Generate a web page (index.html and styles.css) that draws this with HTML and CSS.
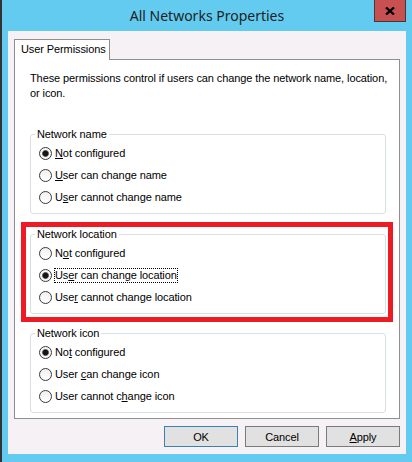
FILE: index.html
```html
<!DOCTYPE html>
<html lang="en">
<head>
<meta charset="utf-8">
<title>All Networks Properties</title>
<link rel="stylesheet" href="styles.css">
</head>
<body>
<div class="window">
  <div class="titlebar">
    <span class="title">All Networks Properties</span>
    <button class="close" aria-label="Close">
      <svg width="10" height="8" viewBox="0 0 10 8"><path d="M1 0.5 L9 7.5 M9 0.5 L1 7.5" stroke="#000" stroke-width="2.3" fill="none"/></svg>
    </button>
  </div>
  <div class="client">
    <div class="tabs"><div class="tab">User Permissions</div></div>
    <div class="panel">
      <p class="desc">These permissions control if users can change the network name, location,<br>or icon.</p>

      <fieldset class="group first">
        <legend>Network name</legend>
        <label class="option"><span class="radio checked"></span><span class="text"><u>N</u>ot configured</span></label>
        <label class="option"><span class="radio"></span><span class="text"><u>U</u>ser can change name</span></label>
        <label class="option"><span class="radio"></span><span class="text">U<u>s</u>er cannot change name</span></label>
      </fieldset>

      <div class="highlight">
        <fieldset class="group">
          <legend>Network location</legend>
          <label class="option"><span class="radio"></span><span class="text">N<u>o</u>t configured</span></label>
          <label class="option"><span class="radio checked"></span><span class="text focused">Us<u>e</u>r can change location</span></label>
          <label class="option"><span class="radio"></span><span class="text">Use<u>r</u> cannot change location</span></label>
        </fieldset>
      </div>

      <fieldset class="group last">
        <legend>Network icon</legend>
        <label class="option"><span class="radio checked"></span><span class="text">No<u>t</u> configured</span></label>
        <label class="option"><span class="radio"></span><span class="text">User <u>c</u>an change icon</span></label>
        <label class="option"><span class="radio"></span><span class="text">User cannot c<u>h</u>ange icon</span></label>
      </fieldset>
    </div>
    <div class="buttons">
      <button class="btn default">OK</button>
      <button class="btn">Cancel</button>
      <button class="btn"><u>A</u>pply</button>
    </div>
  </div>
</div>
</body>
</html>
```

FILE: styles.css
```css
* { box-sizing: border-box; }

html, body {
  margin: 0;
  padding: 0;
}

body {
  width: 412px;
  height: 462px;
  overflow: hidden;
  background: #62cbef;
  font-family: "Liberation Sans", Arial, sans-serif;
  font-size: 11px;
  color: #000;
}

.window {
  width: 412px;
  height: 462px;
  background: #62cbef;
  border-left: 2px solid #333;
  display: flex;
  flex-direction: column;
}

.titlebar {
  position: relative;
  height: 31px;
  display: flex;
  align-items: center;
  justify-content: center;
}

.title {
  font-family: "Noto Sans", "Open Sans", sans-serif;
  font-size: 14px;
  color: #1e1e1e;
}

.close {
  position: absolute;
  top: 0;
  right: 6px;
  width: 32px;
  height: 22px;
  padding: 0;
  margin: 0;
  background: #c75050;
  border: 1px solid #4a3434;
  border-top: 0;
  display: flex;
  align-items: center;
  justify-content: center;
}

.client {
  margin-left: 6px;
  width: 398px;
  height: 423px;
  background: #f5f1f5;
  padding: 8px 6px 7px 6px;
  letter-spacing: -0.1px;
}

.tabs {
  display: flex;
}

.tab {
  position: relative;
  z-index: 1;
  width: 96px;
  height: 21px;
  margin-bottom: -1px;
  padding-left: 6px;
  background: #fff;
  border: 1px solid #8e8e8e;
  border-bottom: 0;
  line-height: 19px;
  white-space: nowrap;
}

.panel {
  height: 360px;
  background: #fff;
  border: 1px solid #8e8e8e;
  padding: 11px 13px 0 15px;
}

.desc {
  margin: 0;
  line-height: 15px;
  white-space: nowrap;
}

.group {
  margin: 0;
  min-width: 0;
  padding: 0 8px 5px 8px;
  border: 1px solid #d5dfe5;
  border-radius: 3px;
}

.group.first {
  margin-top: 26px;
}

.group.last {
  margin-top: 4px;
}

.group legend {
  padding: 0 2px;
  margin-left: -4px;
  line-height: 15px;
  font-size: 11px;
}

.highlight {
  margin: 8px -7px 0 -9px;
  border: 5px solid #ed1c24;
  padding: 0 2px 3px 4px;
}

.option {
  display: flex;
  align-items: center;
  height: 22px;
}

.radio {
  flex: none;
  width: 13px;
  height: 13px;
  margin-right: 3px;
  border: 1px solid #3a3a3a;
  border-radius: 50%;
  background: linear-gradient(#f0f0f0, #fff);
}

.radio.checked {
  background: radial-gradient(circle at center, #151515 0 2.4px, #6a6a6a 3.1px, #f6f6f6 3.8px);
}

.text {
  white-space: nowrap;
  line-height: 13px;
}

.text u {
  text-underline-offset: 1px;
}

.focused {
  outline: 1px dotted #000;
  outline-offset: 0;
}

.buttons {
  display: flex;
  justify-content: flex-end;
  gap: 7px;
  margin-top: 7px;
}

.btn {
  width: 74px;
  height: 21px;
  padding: 0;
  margin: 0;
  font-family: "Liberation Sans", Arial, sans-serif;
  font-size: 11px;
  letter-spacing: -0.1px;
  color: #000;
  background: #e1e1e1;
  border: 1px solid #7a7a7a;
}

.btn.default {
  border-color: #3c7fb1;
}
```
